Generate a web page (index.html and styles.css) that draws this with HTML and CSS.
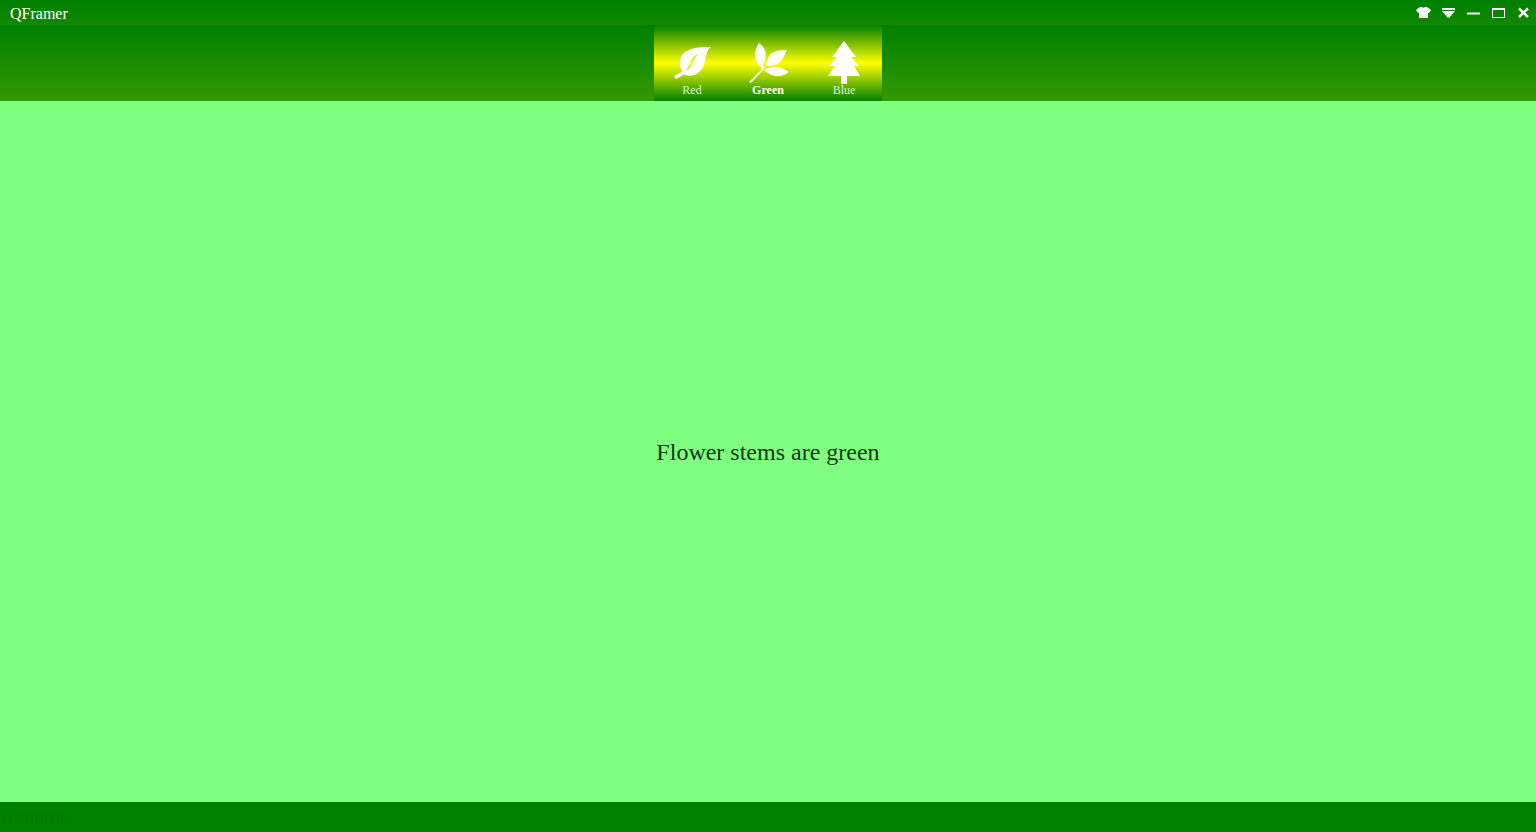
FILE: index.html
```html
<!DOCTYPE html>
<html lang="en">
<head>
<meta charset="utf-8">
<title>QFramer</title>
<link rel="stylesheet" href="styles.css">
</head>
<body class="window">
<header class="titlebar">
  <h1 class="title">QFramer</h1>
  <div class="controls">
    <button class="control" type="button" aria-label="Theme"><svg viewBox="0 0 15 15"><path d="M4 2H6Q7.500 3.500 9 2H11L15 5 13 8 12 7.500V13H3V7.500L2 8 0 5Z"/></svg></button>
    <button class="control" type="button" aria-label="Menu"><svg viewBox="0 0 15 15"><path d="M1 3H14V5H1ZM1 6H14L8.500 12.500H6.500Z"/></svg></button>
    <button class="control" type="button" aria-label="Minimize"><svg viewBox="0 0 15 15"><path d="M1 7.500H14V9.500H1Z"/></svg></button>
    <button class="control" type="button" aria-label="Maximize"><svg viewBox="0 0 15 15"><path fill-rule="evenodd" d="M1 3H14V13H1ZM2 5V12H13V5Z"/></svg></button>
    <button class="control" type="button" aria-label="Close"><svg viewBox="0 0 15 15"><path class="cross" d="M3 3.500L12 12M12 3.500L3 12"/></svg></button>
  </div>
</header>
<nav class="toolbar">
  <div class="tabs">
    <button class="tab" type="button">
      <svg class="tab-icon" viewBox="0 0 48 48"><path fill-rule="evenodd" d="M43 9C38 13 38 18 37 23C35 34 26 40 17 37L15 37L8 41L6 38L14 34C10 25 12 16 19 13C26 9 35 9 43 9ZM31 15C26 18 23 21 22 25C21 29 19 31 17 32C20 32 22 30 24 27C26 22 27 19 31 15Z"/></svg>
      <span>Red</span>
    </button>
    <button class="tab active" type="button">
      <svg class="tab-icon" viewBox="0 0 48 48"><path d="M15 5C24 11 23 20 18 30C9 22 9 15 15 5ZM43 12C38 22 37 28 22 28C24 15 29 12 43 12ZM20 32C30 27 37 29 45 34C37 40 29 40 20 32ZM18 29L21 28L20 31L7 45L5 44L18 31Z"/></svg>
      <span>Green</span>
    </button>
    <button class="tab" type="button">
      <svg class="tab-icon" viewBox="0 0 48 48"><path d="M24 3L36 19H31L39 28H34L40 38H27V46H21V38H8L15 28H9L17 19H12Z"/></svg>
      <span>Blue</span>
    </button>
  </div>
</nav>
<main class="content">
  <p class="message">Flower stems are green</p>
</main>
<footer class="status">Running</footer>
</body>
</html>
```
FILE: styles.css
```css
* {
  box-sizing: border-box;
}

.window {
  display: flex;
  flex-direction: column;
  min-height: 100vh;
  margin: 0;
  background: #80ff80;
  font-family: "Liberation Serif", serif;
}

.titlebar {
  display: flex;
  align-items: center;
  justify-content: space-between;
  height: 25px;
  padding-left: 10px;
  background: linear-gradient(#008000, #118800);
  color: #fff;
}

.title {
  margin: 0;
  padding-top: 2px;
  font-size: 16px;
  font-weight: 400;
  line-height: 20px;
}

.controls {
  display: flex;
}

.control {
  display: grid;
  place-items: center;
  width: 25px;
  height: 25px;
  padding: 0;
  border: 0;
  background: none;
}

.control svg {
  width: 15px;
  height: 15px;
  fill: #fff;
}

.control .cross {
  fill: none;
  stroke: #fff;
  stroke-width: 2.5;
}

.toolbar {
  display: flex;
  justify-content: center;
  background: linear-gradient(#008000, #339900);
}

.tabs {
  display: flex;
  background: linear-gradient(#008000, #ffff00, #008000);
}

.tab {
  display: grid;
  grid-template-rows: 46px 12px;
  justify-items: center;
  align-content: start;
  width: 76px;
  height: 76px;
  padding: 13px 0 0;
  border: 0;
  background: none;
  color: #d8f8c8;
  font-family: inherit;
  font-size: 12px;
  line-height: 12px;
}

.tab.active {
  color: #fff;
  font-weight: 700;
}

.tab-icon {
  width: 48px;
  height: 48px;
  fill: #fff;
}

.content {
  display: flex;
  flex: 1;
  align-items: center;
  justify-content: center;
}

.message {
  margin: 0;
  color: #103810;
  font-size: 24px;
  line-height: 28px;
}

.status {
  height: 30px;
  padding-left: 1px;
  background: #008000;
  color: #007a00;
  font-size: 20px;
  line-height: 30px;
}
```
